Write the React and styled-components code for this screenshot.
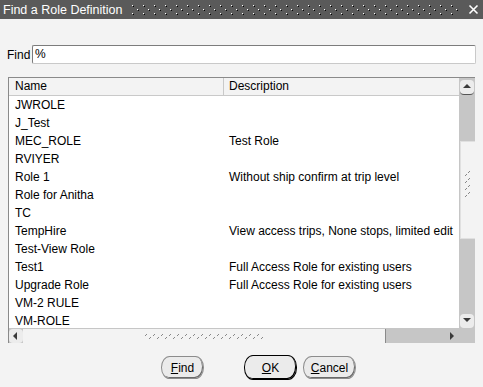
import React from "react";
import styled, { createGlobalStyle } from "styled-components";

const GlobalStyle = createGlobalStyle`
  html, body {
    margin: 0;
    padding: 0;
    background: #f3f3f3;
  }
`;

const Window = styled.div`
  width: 483px;
  height: 387px;
  background: #f3f3f3;
  display: flex;
  flex-direction: column;
  font-family: "Liberation Sans", Arial, sans-serif;
  font-size: 12px;
  color: #000;
  overflow: hidden;
`;

const TitleBar = styled.div`
  height: 19px;
  flex: none;
  background: #5a5a5a;
  color: #fff;
  display: flex;
  align-items: center;
  padding: 0 4px 0 3px;
  gap: 9px;
`;

const TitleText = styled.span`
  font-size: 12.5px;
  white-space: nowrap;
`;

const TitleGrip = styled.svg`
  flex: 1;
  height: 19px;
`;

const Close = styled.svg`
  width: 11px;
  height: 11px;
  flex: none;
`;

const FindRow = styled.div`
  display: flex;
  align-items: center;
  margin: 26px 7px 0 7px;
  height: 19px;
`;

const Label = styled.label`
  width: 25px;
  flex: none;
`;

const TextInput = styled.div`
  flex: 1;
  height: 17px;
  line-height: 17px;
  background: #fff;
  border: 1px solid;
  border-color: #7c7c7c #c9c9c9 #c9c9c9 #7c7c7c;
  border-radius: 2px;
  padding-left: 2px;
`;

const Table = styled.div`
  margin: 13px 8px 0 8px;
  height: 265px;
  display: grid;
  grid-template-columns: 1fr 16px;
  grid-template-rows: 1fr 15px;
  border-top: 1px solid #8a8a8a;
  border-left: 1px solid #8a8a8a;
  background: #fff;
`;

const List = styled.div`
  overflow: hidden;
`;

const Columns = styled.div`
  display: grid;
  grid-template-columns: 215px 1fr;
  height: ${({ $head }) => ($head ? "17px" : "18px")};
  line-height: ${({ $head }) => ($head ? "17px" : "18px")};
  background: ${({ $head }) => ($head ? "#f3f3f3" : "#fff")};
  border-bottom: ${({ $head }) => ($head ? "1px solid #c9c9c9" : "none")};
  white-space: nowrap;
`;

const Cell = styled.div`
  padding-left: ${({ $first }) => ($first ? "6px" : "5px")};
  border-right: ${({ $sep }) => ($sep ? "1px solid #c9c9c9" : "none")};
  overflow: hidden;
`;

const VScroll = styled.div`
  background: #c6c6c6;
  display: flex;
  flex-direction: column;
  align-items: center;
  padding-top: 2px;
`;

const ArrowBtn = styled.div`
  width: 14px;
  height: 14px;
  flex: none;
  display: flex;
  align-items: center;
  justify-content: center;
  background: ${({ $flat }) => ($flat ? "transparent" : "#ececec")};
  border-radius: 4px;
  border-bottom: ${({ $flat, $line }) =>
    !$flat && $line ? "1px solid #555" : "none"};
`;

const VThumb = styled.div`
  width: 15px;
  height: 98px;
  margin-top: 46px;
  background: #f3f3f3;
  border: 1px solid #e0e0e0;
  border-right: none;
  box-sizing: border-box;
  display: flex;
  align-items: center;
  justify-content: center;
  padding-bottom: 10px;
`;

const Spacer = styled.div`
  flex: 1;
`;

const HScroll = styled.div`
  background: #c6c6c6;
  display: flex;
  align-items: center;
  border-top: 1px solid #c6c6c6;
`;

const HThumb = styled.div`
  width: 363px;
  height: 14px;
  background: #f3f3f3;
  border-right: 1px solid #8a8a8a;
  display: flex;
  align-items: center;
  justify-content: center;
  box-sizing: border-box;
`;

const Corner = styled.div`
  background: #c6c6c6;
`;

const ButtonRow = styled.div`
  display: flex;
  align-items: center;
  padding: 12px 0 0 161px;
`;

const Button = styled.button`
  font-family: inherit;
  font-size: 12px;
  color: #000;
  height: ${({ $default }) => ($default ? "25px" : "23px")};
  width: ${({ $w }) => $w}px;
  margin-left: ${({ $gap }) => $gap || 0}px;
  padding: 0;
  background: #ebebeb;
  border: 1px solid ${({ $default }) => ($default ? "#000" : "#8c8c8c")};
  border-radius: 9px / 12px;
  box-shadow: ${({ $default }) =>
    $default ? "inset -1px -1px 0 #000" : "inset -1px -1px 0 #6a6a6a"};
  cursor: pointer;
`;

const rows = [
  ["JWROLE", ""],
  ["J_Test", ""],
  ["MEC_ROLE", "Test Role"],
  ["RVIYER", ""],
  ["Role 1", "Without ship confirm at trip level"],
  ["Role for Anitha", ""],
  ["TC", ""],
  ["TempHire", "View access trips, None stops, limited edit"],
  ["Test-View Role", ""],
  ["Test1", "Full Access Role for existing users"],
  ["Upgrade Role", "Full Access Role for existing users"],
  ["VM-2 RULE", ""],
  ["VM-ROLE", ""],
];

const Triangle = ({ dir }) => {
  const pts = {
    up: "1,6 5,2 9,6",
    down: "1,2 5,6 9,2",
    left: "6,1 2,5 6,9",
    right: "3,1 7,5 3,9",
  }[dir];
  return (
    <svg width="10" height="10" viewBox="0 0 10 10">
      <polygon points={pts} fill="#3a3a3a" />
    </svg>
  );
};

const App = () => (
  <>
    <GlobalStyle />
    <Window>
      <TitleBar>
        <TitleText>Find a Role Definition</TitleText>
        <TitleGrip>
          <defs>
            <pattern id="tg" width="11" height="8" patternUnits="userSpaceOnUse" y="5">
              <rect x="0" y="0" width="1" height="1" fill="#fff" />
              <rect x="1" y="1" width="1" height="1" fill="#000" />
              <rect x="5" y="4" width="1" height="1" fill="#fff" />
              <rect x="6" y="5" width="1" height="1" fill="#000" />
            </pattern>
          </defs>
          <rect x="0" y="5" width="100%" height="10" fill="url(#tg)" />
        </TitleGrip>
        <Close viewBox="0 0 11 11">
          <path d="M1.5 1.5 L9.5 9.5 M9.5 1.5 L1.5 9.5" stroke="#fff" strokeWidth="1.6" />
        </Close>
      </TitleBar>

      <FindRow>
        <Label>Find</Label>
        <TextInput>%</TextInput>
      </FindRow>

      <Table>
        <List>
          <Columns $head>
            <Cell $first $sep>Name</Cell>
            <Cell>Description</Cell>
          </Columns>
          {rows.map(([name, desc]) => (
            <Columns key={name}>
              <Cell $first>{name}</Cell>
              <Cell>{desc}</Cell>
            </Columns>
          ))}
        </List>

        <VScroll>
          <ArrowBtn $line>
            <Triangle dir="up" />
          </ArrowBtn>
          <VThumb>
            <svg width="9" height="30" viewBox="0 0 9 30">
              {[0, 7, 14, 21].map((y) => (
                <g key={y}>
                  <rect x="6" y={y + 1} width="1" height="1" fill="#888" />
                  <rect x="5" y={y + 2} width="1" height="1" fill="#888" />
                  <rect x="3" y={y + 4} width="1" height="1" fill="#888" />
                  <rect x="2" y={y + 5} width="1" height="1" fill="#888" />
                </g>
              ))}
            </svg>
          </VThumb>
          <Spacer />
          <ArrowBtn>
            <Triangle dir="down" />
          </ArrowBtn>
        </VScroll>

        <HScroll>
          <ArrowBtn>
            <Triangle dir="left" />
          </ArrowBtn>
          <HThumb>
            <svg width="122" height="6" viewBox="0 0 122 6">
              {Array.from({ length: 16 }, (_, i) => (
                <g key={i}>
                  <rect x={i * 8 + 3} y="1" width="1" height="1" fill="#888" />
                  <rect x={i * 8 + 2} y="2" width="1" height="1" fill="#888" />
                  <rect x={i * 8 - 1} y="4" width="1" height="1" fill="#888" />
                  <rect x={i * 8 - 2} y="5" width="1" height="1" fill="#888" />
                </g>
              ))}
            </svg>
          </HThumb>
          <Spacer />
          <ArrowBtn $flat>
            <Triangle dir="right" />
          </ArrowBtn>
        </HScroll>
        <Corner />
      </Table>

      <ButtonRow>
        <Button $w={43}>
          <u>F</u>ind
        </Button>
        <Button $w={53} $gap={40} $default>
          <u>O</u>K
        </Button>
        <Button $w={53} $gap={6}>
          <u>C</u>ancel
        </Button>
      </ButtonRow>
    </Window>
  </>
);

export default App;
